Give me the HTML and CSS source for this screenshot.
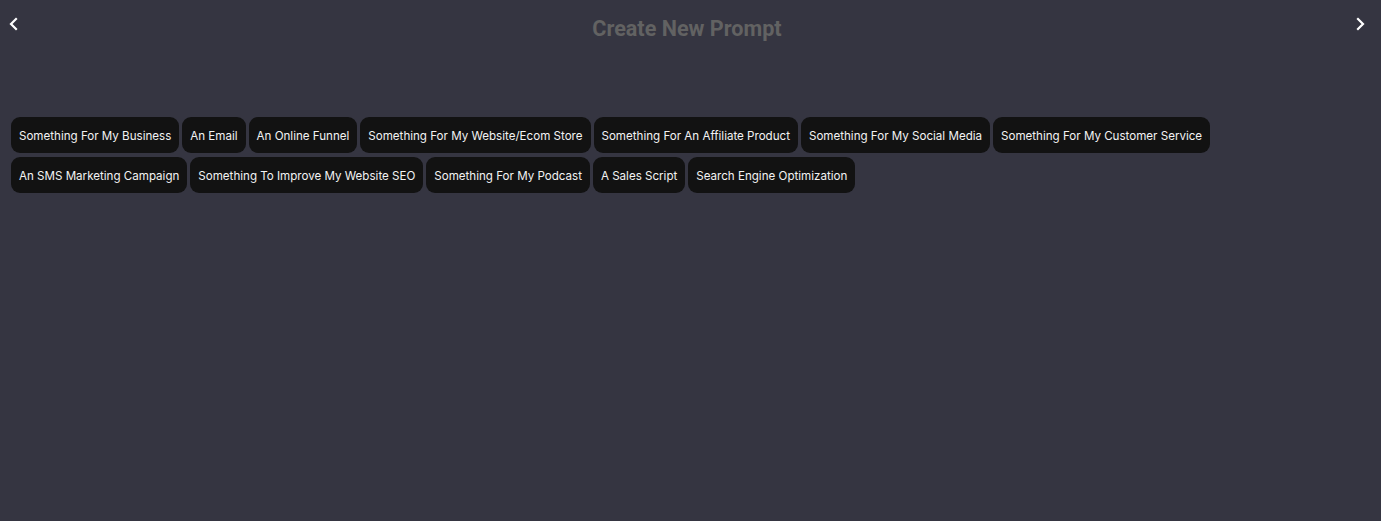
FILE: index.html
```html
<!DOCTYPE html>
<html>
<head>
<meta charset="utf-8">
<link rel="stylesheet" href="styles.css">
</head>
<body>
<div class="page">
  <header class="topbar">
    <button class="nav-btn" aria-label="Back">
      <svg width="12" height="14" viewBox="0 0 12 14"><path d="M8 2 L3 7 L8 12" fill="none" stroke="#fff" stroke-width="2.2" stroke-linecap="square"/></svg>
    </button>
    <h1 class="title">Create New Prompt</h1>
    <button class="nav-btn" aria-label="Next">
      <svg width="12" height="14" viewBox="0 0 12 14"><path d="M4 2 L9 7 L4 12" fill="none" stroke="#fff" stroke-width="2.2" stroke-linecap="square"/></svg>
    </button>
  </header>
  <div class="chips">
    <button class="chip">Something For My Business</button>
    <button class="chip">An Email</button>
    <button class="chip">An Online Funnel</button>
    <button class="chip">Something For My Website/Ecom Store</button>
    <button class="chip">Something For An Affiliate Product</button>
    <button class="chip">Something For My Social Media</button>
    <button class="chip">Something For My Customer Service</button>
    <button class="chip">An SMS Marketing Campaign</button>
    <button class="chip">Something To Improve My Website SEO</button>
    <button class="chip">Something For My Podcast</button>
    <button class="chip">A Sales Script</button>
    <button class="chip">Search Engine Optimization</button>
  </div>
</div>
</body>
</html>
```
FILE: styles.css
```css
html, body {
  margin: 0;
  padding: 0;
  background: #353541;
  height: 100%;
}
.page {
  padding: 0 15px 0 8px;
}
.topbar {
  display: flex;
  align-items: center;
  justify-content: space-between;
  height: 56px;
}
.nav-btn {
  background: none;
  border: 0;
  padding: 0;
  width: 12px;
  height: 14px;
  display: flex;
  margin-top: -8px;
  cursor: pointer;
}
.title {
  margin: 0;
  font-family: Roboto, "Liberation Sans", sans-serif;
  font-weight: 700;
  font-size: 21.6px;
  color: #626262;
}
.chips {
  margin: 61px -12px 0 3px;
  display: flex;
  flex-wrap: wrap;
  gap: 4px 3px;
}
.chip {
  font-family: Inter, "Noto Sans", sans-serif;
  font-size: 11.58px;
  color: #f2f2f2;
  background: #121212;
  border: 0;
  border-radius: 9px;
  height: 36px;
  padding: 2px 8px 0;
  cursor: pointer;
}
```
